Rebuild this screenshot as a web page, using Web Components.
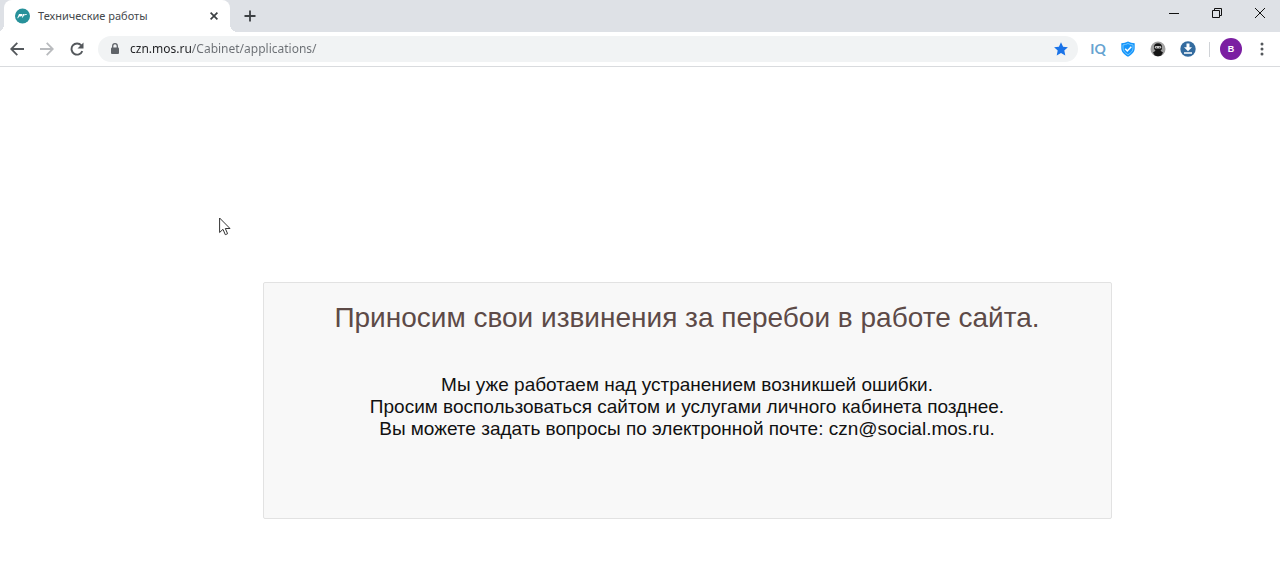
<!DOCTYPE html>
<html lang="ru">
<head>
<meta charset="utf-8">
<meta name="viewport" content="width=device-width, initial-scale=1">
<title>Технические работы</title>
<style>
html, body { margin: 0; height: 100%; }
body { background: #fff; font-family: "Liberation Sans", Arial, sans-serif; }
</style>
</head>
<body>
<browser-window>
  <tab-strip slot="tabs"><browser-tab>Технические работы</browser-tab></tab-strip>
  <nav-bar slot="toolbar" host="czn.mos.ru" path="/Cabinet/applications/"></nav-bar>
  <notice-card>
    <span slot="title">Приносим свои извинения за перебои в работе сайта.</span>
    Мы уже работаем над устранением возникшей ошибки.<br>
    Просим воспользоваться сайтом и услугами личного кабинета позднее.<br>
    Вы можете задать вопросы по электронной почте: czn@social.mos.ru.
  </notice-card>
</browser-window>
<mouse-pointer></mouse-pointer>
<script>
const define = (name, html, setup) => customElements.define(name, class extends HTMLElement {
  connectedCallback() {
    if (this.shadowRoot) return;
    this.attachShadow({ mode: "open" }).innerHTML = html;
    if (setup) setup(this, this.shadowRoot);
  }
});
const reset = `*{box-sizing:border-box} button{border:0;padding:0;margin:0;background:none;font:inherit;color:inherit;display:grid;place-items:center;flex:none} svg{display:block}`;

define("browser-window", `<style>
  :host{display:flex;flex-direction:column;min-height:100%}
  main{flex:1;padding:215px 0 24px 94px}
</style>
<header><slot name="tabs"></slot><slot name="toolbar"></slot></header>
<main><slot></slot></main>`);

define("tab-strip", `<style>${reset}
  :host{display:flex;height:32px;padding-left:4px;background:#dee1e6;color:#3c4043}
  .new{width:28px;height:32px;margin-left:6px}
  .controls{display:flex;gap:3px;margin-left:auto;color:#111}
  .controls button{width:40px;height:26px}
</style>
<slot></slot>
<button class="new" aria-label="Новая вкладка"><svg width="12" height="12"><path d="M6 .5v11M.5 6h11" stroke="currentColor" stroke-width="1.800"/></svg></button>
<div class="controls">
  <button aria-label="Свернуть"><svg width="10" height="10"><path d="M0 5.5h10" stroke="currentColor"/></svg></button>
  <button aria-label="Восстановить"><svg width="10" height="10" fill="none" stroke="currentColor"><path d="M.5 2.500h7v7h-7zM2.500 2.500v-2h7v7h-2"/></svg></button>
  <button aria-label="Закрыть"><svg width="10" height="10"><path d="M0 0l10 10M10 0L0 10" stroke="currentColor"/></svg></button>
</div>`);

define("browser-tab", `<style>${reset}
  :host{position:relative;display:flex;align-items:center;box-sizing:border-box;width:226px;height:32px;padding:0 8px 0 10px;gap:8px;background:#fff;border-radius:8px 8px 0 0;font:11px/16px "Noto Sans",sans-serif;color:#45494d}
  :host::before,:host::after{content:"";position:absolute;bottom:0;width:8px;height:8px}
  :host::before{right:100%;background:radial-gradient(circle at 0 0,#dee1e6 8px,#fff 8px)}
  :host::after{left:100%;background:radial-gradient(circle at 100% 0,#dee1e6 8px,#fff 8px)}
  span{flex:1;white-space:nowrap}
  button{width:16px;height:16px}
</style>
<svg width="16" height="16" viewBox="0 0 16 16"><circle cx="8.500" cy="8" r="7.500" fill="#27919a"/><path d="M5 6h3q1 .3.300 1.500-.6 1.200-2 1.100L5 8.500 4.200 10.200H3.200zM9.200 6h1l-.2.500q1-.6 3-.4l-.7 1q-2-.1-2.700.9L8.800 9.500h-1z" fill="#fff"/></svg>
<span><slot></slot></span>
<button aria-label="Закрыть вкладку"><svg width="8" height="8"><path d="M.6.6l6.800 6.800M7.400.6L.6 7.400" stroke="#3c4043" stroke-width="1.700"/></svg></button>`);

define("nav-bar", `<style>${reset}
  :host{display:flex;align-items:center;box-sizing:border-box;height:35px;padding:0 3px 0 2px;border-bottom:1px solid #d9dbde;background:#fff;color:#54585c}
  button{width:30px;height:28px}
  .bar{display:flex;align-items:center;flex:1;min-width:0;height:26px;margin-left:6px;padding:0 4px 0 12px;background:#f1f3f4;border-radius:13px}
  input{flex:1;min-width:0;height:20px;margin-left:10px;border:0;outline:0;padding:0;font:12px/20px "Noto Sans",sans-serif;color:transparent;caret-color:#202124;background:linear-gradient(90deg,#202124 61px,#6a6e73 61px);-webkit-background-clip:text;background-clip:text}
  .bar button{width:26px}
  .ext{display:flex;margin-left:5px}
  .iq{font:bold 14px/16px Lato,sans-serif;color:#67a3d1}
  .sep{width:1px;height:15px;margin:0 3px 0 6px;background:#d0d3d7}
  .me{width:22px;height:22px;margin:0 5px 0 7px;border-radius:50%;background:#7b1fa2;color:#fff;font:bold 9px/22px "Liberation Sans",sans-serif}
</style>
<button aria-label="Назад"><svg width="14" height="14" fill="none" stroke="currentColor" stroke-width="1.800"><path d="M14 7H1.500M7.300.9L1.200 7l6.100 6.100"/></svg></button>
<button aria-label="Вперёд"><svg width="14" height="14" fill="none" stroke="#b9bbbe" stroke-width="1.800"><path d="M0 7h12.500M6.700.9L12.800 7l-6.100 6.100"/></svg></button>
<button aria-label="Обновить"><svg width="14" height="14" viewBox="0 0 14 14"><path d="M12.300 9.200A5.600 5.600 0 1 1 11.300 3.300" fill="none" stroke="currentColor" stroke-width="1.900"/><path d="M13.500.5v6h-6z" fill="currentColor"/></svg></button>
<div class="bar">
  <svg width="10" height="12" viewBox="0 0 10 12"><rect x="1" y="4.500" width="8" height="6.500" rx="1" fill="#5f6368"/><path d="M2.700 5V3a2.300 2.300 0 0 1 4.600 0v2" fill="none" stroke="#5f6368" stroke-width="1.300"/></svg>
  <input type="text" aria-label="Адресная строка" spellcheck="false">
  <button aria-label="Изменить закладку"><svg width="14" height="14" viewBox="0 0 14 14"><path d="M7 .2l2.100 4.500 4.800.5-3.600 3.300 1 4.900L7 11l-4.300 2.400 1-4.900L.1 5.200l4.800-.5z" fill="#1a73e8"/></svg></button>
</div>
<div class="ext">
  <button class="iq">IQ</button>
  <button aria-label="Защита"><svg width="16" height="16" viewBox="0 0 16 16"><path d="M8 .5q3 1.800 6.700 1.800V7c0 4-2.700 6.700-6.700 8.700C4 13.700 1.300 11 1.300 7V2.300Q5 2.300 8 .5z" fill="#1695fb"/><path d="M8 2.500q2.400 1.300 5 1.400V7c0 3-2 5-5 6.700C5 12 3 10 3 7V3.900q2.600-.1 5-1.400z" fill="none" stroke="#73c8ff"/><path d="M5.200 7.700l2.100 2.200 4-4.200" fill="none" stroke="#fff" stroke-width="1.500"/></svg></button>
  <button aria-label="Ниндзя"><svg width="16" height="16" viewBox="0 0 16 16"><circle cx="8" cy="8" r="7.500" fill="#a0a0a0"/><path d="M4 6.300a4 4 0 0 1 8 0c0 1.800-.5 2.700-1.500 3.500l2.500 1.700-1.800 3Q8 16 4.800 14.500L3 11.500l2.500-1.700C4.500 9 4 8 4 6.300z" fill="#151515"/><rect x="4.800" y="5" width="6.400" height="2.500" rx="1.200" fill="#c8c8c8"/><path d="M6 6.300h1M9 6.300h1" stroke="#555"/></svg></button>
  <button aria-label="Загрузить"><svg width="16" height="16" viewBox="0 0 16 16"><circle cx="8" cy="8" r="7.700" fill="#336b9f"/><path d="M6.500 2.500h3v3.700H12L8 10.300 4 6.200h2.500zM4 11.200h8v1.500H4z" fill="#fff"/></svg></button>
</div>
<span class="sep"></span>
<button class="me" aria-label="Профиль">В</button>
<button aria-label="Меню"><svg width="4" height="14" fill="currentColor"><circle cx="2" cy="2" r="1.500"/><circle cx="2" cy="7" r="1.500"/><circle cx="2" cy="12" r="1.500"/></svg></button>`,
(el, root) => {
  const value = el.getAttribute("host") + el.getAttribute("path");
  root.querySelector("input").setAttribute("value", value);
});

define("notice-card", `<style>
  :host{display:block;box-sizing:border-box;max-width:849px;min-height:237px;margin:0 auto;padding:18px 24px;border:1px solid #e2e2e2;border-radius:2px;background:#f8f8f8;text-align:center;color:#111}
  h1{margin:0 0 39px;font-size:28px;line-height:34px;font-weight:400;color:#5d4a47}
  p{margin:0;font-size:19px;line-height:22px}
</style>
<h1><slot name="title"></slot></h1>
<p><slot></slot></p>`);

define("mouse-pointer", `<style>:host{position:absolute;left:219px;top:217px;pointer-events:none} svg{display:block}</style>
<svg width="12" height="19" viewBox="0 0 12 19"><path d="M.6 1v14.500l3.400-3.200 2.300 5.400 2.300-1-2.300-5.200H11z" fill="#fff" stroke="#333"/></svg>`);
</script>
</body>
</html>
